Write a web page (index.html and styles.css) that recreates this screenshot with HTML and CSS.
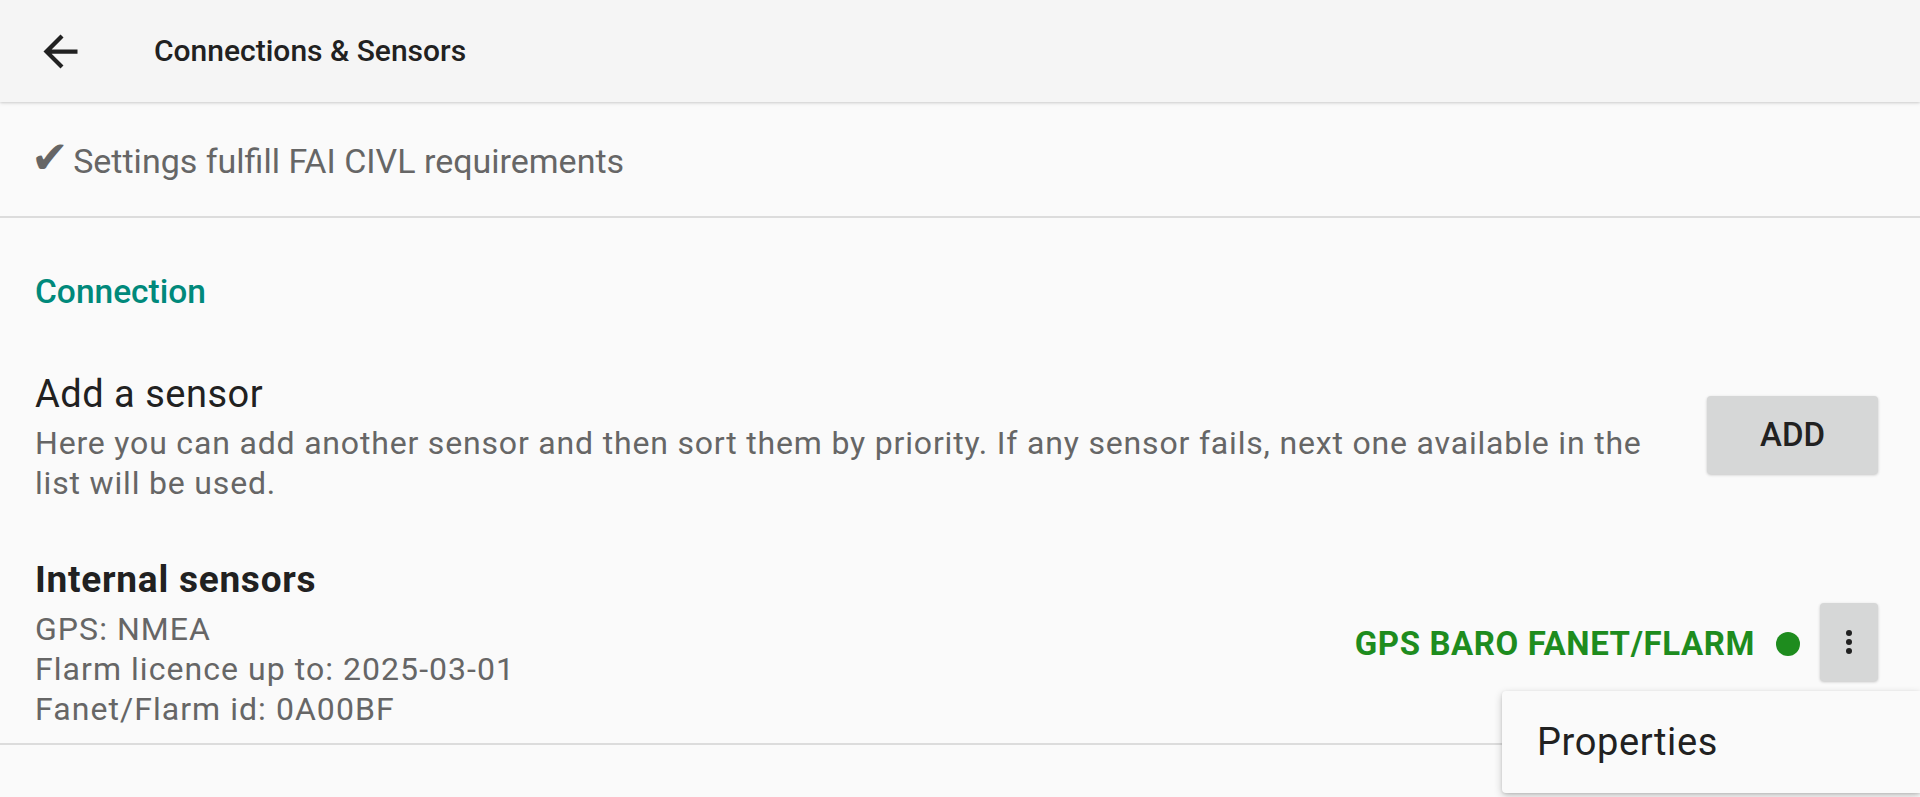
FILE: index.html
```html
<!DOCTYPE html>
<html lang="en">
<head>
<meta charset="utf-8">
<title>Connections &amp; Sensors</title>
<link rel="stylesheet" href="styles.css">
</head>
<body>
<header class="appbar">
  <svg class="back" viewBox="0 0 24 24" width="51" height="51" aria-hidden="true"><path d="M20 11H7.83l5.59-5.59L12 4l-8 8 8 8 1.41-1.41L7.83 13H20v-2z" fill="#212121"/></svg>
  <h1 class="appbar-title">Connections &amp; Sensors</h1>
</header>
<main class="content">
  <div class="fai"><span class="check">✔</span> Settings fulfill FAI CIVL requirements</div>
  <section class="group">
    <h2 class="category">Connection</h2>
    <div class="pref">
      <div class="pref-text">
        <div class="pref-title">Add a sensor</div>
        <div class="pref-summary">Here you can add another sensor and then sort them by priority. If any sensor fails, next one available in the list will be used.</div>
      </div>
      <button class="btn-add">ADD</button>
    </div>
    <div class="sensor">
      <div class="sensor-text">
        <div class="sensor-title">Internal sensors</div>
        <div class="sensor-line">GPS: NMEA</div>
        <div class="sensor-line">Flarm licence up to: 2025-03-01</div>
        <div class="sensor-line">Fanet/Flarm id: 0A00BF</div>
      </div>
      <div class="status">
        <span class="status-text">GPS BARO FANET/FLARM</span>
        <span class="status-dot"></span>
        <button class="btn-more" aria-label="More"><span class="dots"><i></i><i></i><i></i></span></button>
      </div>
    </div>
  </section>
  <div class="popup"><span class="popup-item">Properties</span></div>
</main>
</body>
</html>
```
FILE: styles.css
```css
html, body {
  margin: 0;
  padding: 0;
  height: 100%;
}
body {
  background: #fafafa;
  font-family: Roboto, "Noto Sans", sans-serif;
  color: #212121;
  overflow: hidden;
}
.appbar {
  height: 102px;
  background: #f5f5f5;
  display: flex;
  align-items: center;
  padding-left: 35px;
  box-shadow: 0 1px 2px rgba(0,0,0,0.12), 0 2px 4px rgba(0,0,0,0.06);
  position: relative;
  z-index: 2;
}
.back {
  display: block;
  margin-top: 1px;
}
.appbar-title {
  margin: 0 0 0 68px;
  font-size: 30px;
  font-weight: 500;
  color: #212121;
  line-height: 40px;
}
.content {
  position: relative;
}
.fai {
  padding: 39px 0 35px 35px;
  font-size: 34px;
  line-height: 40px;
  color: #666666;
  border-bottom: 2px solid #dcdcdc;
}
.check {
  font-family: "DejaVu Sans", sans-serif;
  font-size: 45px;
  line-height: 0;
  margin-left: -4px;
  margin-right: -4px;
  color: #666666;
}
.group {
  padding: 54px 42px 14px 35px;
  border-bottom: 2px solid #dcdcdc;
}
.category {
  margin: 0;
  font-size: 33.5px;
  font-weight: 500;
  line-height: 40px;
  color: #00897b;
}
.pref {
  display: flex;
  align-items: center;
  margin-top: 60px;
}
.pref-text {
  flex: 1;
  margin-right: 40px;
}
.pref-title {
  font-size: 38px;
  letter-spacing: 0.5px;
  line-height: 44px;
  color: #212121;
}
.pref-summary {
  margin-top: 7px;
  font-size: 32px;
  letter-spacing: 0.82px;
  line-height: 40px;
  color: #666666;
}
.btn-add {
  width: 171px;
  height: 78px;
  margin-bottom: 6px;
  border: none;
  border-radius: 4px;
  background: #d6d7d7;
  box-shadow: 0 1px 3px rgba(0,0,0,0.22);
  font-family: Roboto, sans-serif;
  font-size: 33px;
  font-weight: 500;
  color: #212121;
  padding: 0;
}
.sensor {
  display: flex;
  align-items: center;
  margin-top: 55px;
}
.sensor-text {
  flex: 1;
}
.sensor-title {
  font-size: 37px;
  font-weight: 700;
  letter-spacing: 0.75px;
  line-height: 44px;
  color: #212121;
}
.sensor-line {
  font-size: 32px;
  letter-spacing: 1.05px;
  line-height: 40px;
  color: #666666;
}
.sensor-title + .sensor-line {
  margin-top: 7px;
}
.status {
  display: flex;
  align-items: center;
}
.status-text {
  font-size: 33px;
  font-weight: 700;
  letter-spacing: 0.6px;
  color: #1e8c1e;
}
.status-dot {
  width: 24px;
  height: 24px;
  border-radius: 50%;
  background: #1e8c1e;
  margin-left: 21px;
  margin-right: 20px;
}
.btn-more {
  width: 58px;
  height: 78px;
  border: none;
  border-radius: 4px;
  background: #d6d7d7;
  box-shadow: 0 1px 3px rgba(0,0,0,0.22);
  padding: 0;
  display: flex;
  align-items: center;
  justify-content: center;
  margin-bottom: 4px;
}
.dots {
  display: flex;
  flex-direction: column;
  gap: 3px;
}
.dots i {
  display: block;
  width: 6px;
  height: 6px;
  border-radius: 50%;
  background: #212121;
}
.popup {
  position: absolute;
  left: 1502px;
  top: 589px;
  width: 418px;
  height: 102px;
  background: #fafafa;
  border-radius: 4px 0 0 4px;
  box-shadow: 0 3px 8px rgba(0,0,0,0.2), 0 1px 3px rgba(0,0,0,0.12);
  display: flex;
  align-items: center;
  padding-left: 35px;
  box-sizing: border-box;
  z-index: 3;
}
.popup-item {
  font-size: 38px;
  letter-spacing: 0.6px;
  color: #212121;
  line-height: 44px;
}
```
